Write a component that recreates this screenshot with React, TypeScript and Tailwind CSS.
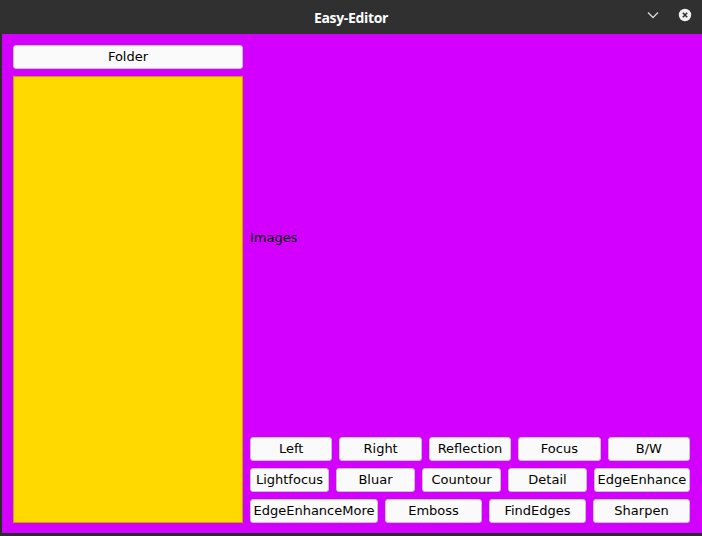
import React from "react";

const rows: { label: string; w?: string }[][] = [
  [{ label: "Left" }, { label: "Right" }, { label: "Reflection" }, { label: "Focus" }, { label: "B/W" }],
  [
    { label: "Lightfocus", w: "w-[79px]" },
    { label: "Bluar", w: "w-[79px]" },
    { label: "Countour", w: "w-[79px]" },
    { label: "Detail", w: "w-[79px]" },
    { label: "EdgeEnhance", w: "w-[96px]" },
  ],
  [
    { label: "EdgeEnhanceMore", w: "w-[128px]" },
    { label: "Emboss", w: "w-[97px]" },
    { label: "FindEdges", w: "w-[97px]" },
    { label: "Sharpen", w: "w-[97px]" },
  ],
];

const Btn = ({ label, className = "" }: { label: string; className?: string }) => (
  <button
    className={`h-[24px] rounded-[3px] border border-[#c4c4c4] bg-[#fafafa] text-[13px] text-black whitespace-nowrap flex items-center justify-center ${className}`}
  >
    {label}
  </button>
);

export default function App() {
  return (
    <div className="w-[702px] h-[536px] flex flex-col bg-[#2c2c2c] overflow-hidden" style={{ fontFamily: "'DejaVu Sans', sans-serif" }}>
      {/* title bar */}
      <div className="h-[34px] flex items-center relative bg-[#303030]">
        <div className="flex-1 text-center text-white font-bold text-[14px] tracking-tight" style={{ fontFamily: "'Open Sans', sans-serif" }}>
          Easy-Editor
        </div>
        <div className="absolute right-[10px] top-[8px] flex items-center gap-[18px]">
          <svg width="14" height="14" viewBox="0 0 14 14">
            <path d="M2 4.5 L7 9.5 L12 4.5" fill="none" stroke="#d8d8d8" strokeWidth="1.3" />
          </svg>
          <svg width="14" height="14" viewBox="0 0 14 14">
            <circle cx="7" cy="7" r="6.2" fill="#f2f2f2" />
            <path d="M4.8 4.8 L9.2 9.2 M9.2 4.8 L4.8 9.2" stroke="#303030" strokeWidth="1.6" />
          </svg>
        </div>
      </div>

      {/* window body */}
      <div className="flex-1 ml-[2px] mb-[3px] bg-[#d400ff] flex gap-[7px] pl-[11px] pr-[12px] pt-[11px] pb-[10px]">
        <div className="w-[230px] flex flex-col gap-[7px]">
          <Btn label="Folder" className="w-full" />
          <div className="flex-1 bg-[#ffd900] border border-[#c4a600]" />
        </div>

        <div className="flex-1 flex flex-col gap-[7px]">
          <div className="flex-1 flex items-center text-[13px] text-black">Images</div>
          {rows.map((row, i) => (
            <div key={i} className="flex gap-[7px]">
              {row.map((b) => (
                <Btn key={b.label} label={b.label} className={b.w ?? "flex-1"} />
              ))}
            </div>
          ))}
        </div>
      </div>
    </div>
  );
}
